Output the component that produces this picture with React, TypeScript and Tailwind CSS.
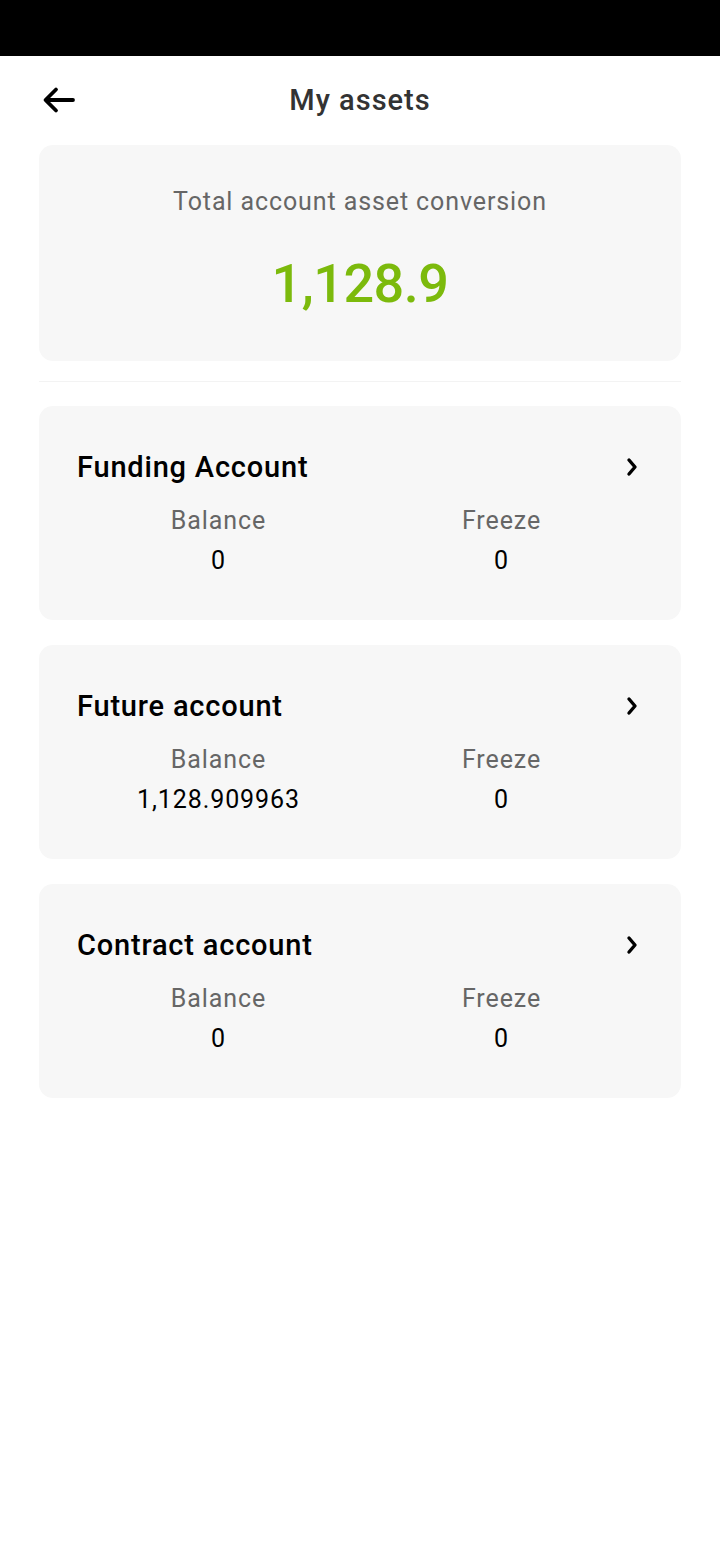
import React from "react";

const accounts = [
  { name: "Funding Account", balance: "0", freeze: "0" },
  { name: "Future account", balance: "1,128.909963", freeze: "0" },
  { name: "Contract account", balance: "0", freeze: "0" },
];

function Chevron() {
  return (
    <svg width="14" height="20" viewBox="0 0 14 20" fill="none">
      <polyline points="4,3 10,10 4,17" stroke="#000" strokeWidth="3.4" strokeLinecap="round" strokeLinejoin="round" />
    </svg>
  );
}

export default function App() {
  return (
    <div className="w-[720px] min-h-[1560px] bg-white" style={{ fontFamily: "Roboto, 'Noto Sans', sans-serif" }}>
      <div className="h-[56px] bg-black" />
      <div className="relative h-[89px] flex items-center justify-center">
        <div className="absolute left-[42px] top-[30px]">
          <svg width="34" height="28" viewBox="0 0 34 28" fill="none">
            <path d="M31 14H4M14 3.5L3.5 14L14 24.5" stroke="#000" strokeWidth="3.8" strokeLinecap="round" strokeLinejoin="round" />
          </svg>
        </div>
        <div className="text-[29px] font-medium tracking-[1px] text-[#333] leading-none">My assets</div>
      </div>
      <div className="px-[39px]">
        <div className="h-[216px] rounded-[14px] bg-[#f7f7f7] flex flex-col items-center">
          <div className="mt-[42px] text-[25px] tracking-[0.9px] leading-[30px] text-[#666]">Total account asset conversion</div>
          <div className="mt-[34px] text-[54px] leading-[66px] font-medium tracking-[-0.5px] text-[#7cba0c]">1,128.9</div>
        </div>
        <div className="mt-[20px] h-px bg-[#f3f3f3]" />
        <div className="mt-[24px] flex flex-col gap-[25px]">
          {accounts.map((a) => (
            <div key={a.name} className="h-[214px] rounded-[14px] bg-[#f7f7f7] px-[38px] pt-[44px]">
              <div className="flex items-center justify-between h-[34px]">
                <div className="text-[29px] font-medium tracking-[0.8px] text-black leading-[34px]">{a.name}</div>
                <div className="mr-[4px]"><Chevron /></div>
              </div>
              <div className="mt-[17px] grid grid-cols-2 text-center text-[25px] tracking-[0.9px]">
                <div>
                  <div className="leading-[40px] text-[#666]">Balance</div>
                  <div className="leading-[40px] text-black">{a.balance}</div>
                </div>
                <div>
                  <div className="leading-[40px] text-[#666]">Freeze</div>
                  <div className="leading-[40px] text-black">{a.freeze}</div>
                </div>
              </div>
            </div>
          ))}
        </div>
      </div>
    </div>
  );
}
